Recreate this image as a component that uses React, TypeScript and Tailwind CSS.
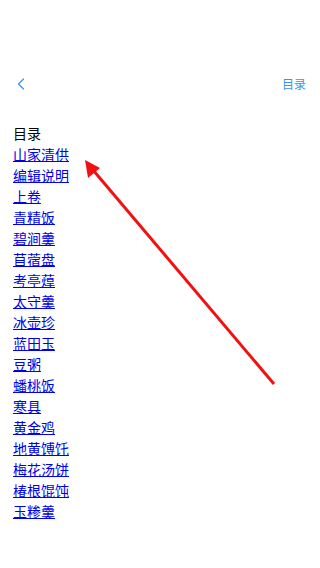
import { ChevronLeft } from "lucide-react";

const chapters = [
  "山家清供",
  "编辑说明",
  "上卷",
  "青精饭",
  "碧涧羹",
  "苜蓿盘",
  "考亭蔊",
  "太守羹",
  "冰壶珍",
  "蓝田玉",
  "豆粥",
  "蟠桃饭",
  "寒具",
  "黄金鸡",
  "地黄馎饦",
  "梅花汤饼",
  "椿根馄饨",
  "玉糁羹",
];

export default function App() {
  return (
    <div
      className="relative min-h-[568px] w-[320px] bg-white"
      style={{ fontFamily: '"Noto Sans CJK SC", "Noto Sans", sans-serif' }}
    >
      <div className="h-[62px]" />
      <div className="flex h-[44px] items-center justify-between pl-[11px] pr-[14px]">
        <ChevronLeft className="h-[20px] w-[20px] text-[#3b93f0]" strokeWidth={1.5} />
        <span className="text-[12px] text-[#3b93f0]">目录</span>
      </div>
      <div className="h-[17px]" />
      <div className="px-[13px] text-[14px] leading-[21px]">
        <div className="text-black">目录</div>
        {chapters.map((c) => (
          <div key={c}>
            <a href="#" className="text-[#0000ee] underline">
              {c}
            </a>
          </div>
        ))}
      </div>
      <svg
        className="pointer-events-none absolute left-0 top-0"
        width="320"
        height="568"
        viewBox="0 0 320 568"
      >
        <line x1="274" y1="384" x2="93" y2="170" stroke="#f21010" strokeWidth="3" />
        <polygon points="85,160 88,178 100,168" fill="#f21010" />
      </svg>
    </div>
  );
}
